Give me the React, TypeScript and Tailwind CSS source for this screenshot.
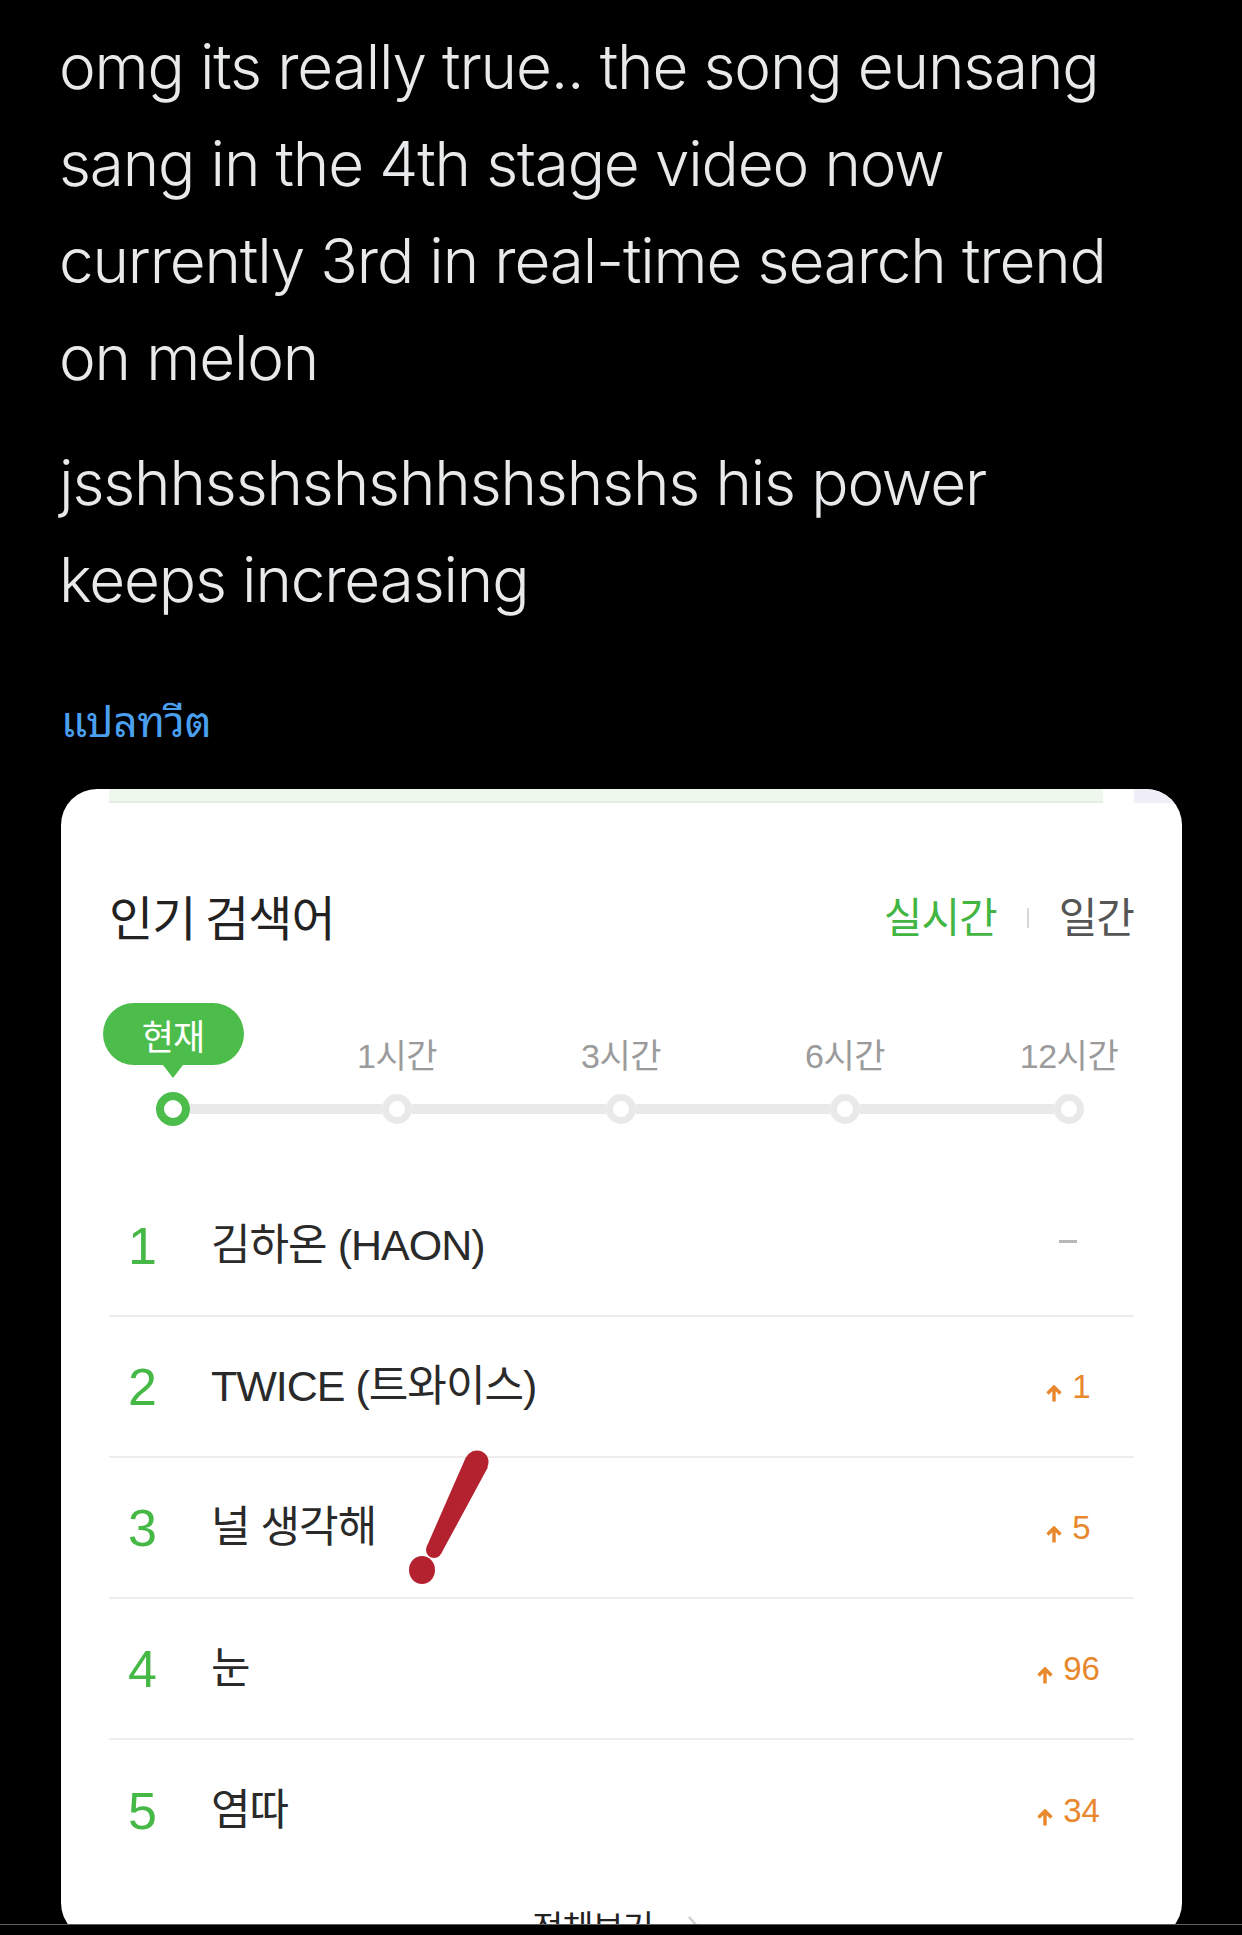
import React from "react";

const GREEN = "#4cbd4a";
const ORANGE = "#e8872c";
const RED = "#b3222e";

function UpArrow() {
  return (
    <svg width="18" height="17" viewBox="0 0 18 17" className="mr-[9px] mb-[1px]">
      <path d="M9 2.5 L9 16.5 M2.5 8.5 L9 2 L15.5 8.5" stroke={ORANGE} strokeWidth="3.4" fill="none" strokeLinejoin="miter" />
    </svg>
  );
}

const rows: { n: string; name: string; change: string | null }[] = [
  { n: "1", name: "김하온 (HAON)", change: null },
  { n: "2", name: "TWICE (트와이스)", change: "1" },
  { n: "3", name: "널 생각해", change: "5" },
  { n: "4", name: "눈", change: "96" },
  { n: "5", name: "염따", change: "34" },
];

const times = ["현재", "1시간", "3시간", "6시간", "12시간"];

const KR = "'Noto Sans CJK KR', sans-serif";

export default function App() {
  return (
    <div className="relative w-[1242px] h-[1935px] overflow-hidden bg-black">
      {/* Tweet text */}
      <div
        className="pl-[59px] pr-[20px] pt-[18px] text-[62px] leading-[97px] font-light text-[#e7e9ea] tracking-[-1.15px] whitespace-nowrap"
        style={{ fontFamily: "Inter, 'Noto Sans', sans-serif" }}
      >
        <p>
          omg its really true.. the song eunsang
          <br />
          sang in the 4th stage video now
          <br />
          currently 3rd in real-time search trend
          <br />
          on melon
        </p>
        <p className="mt-[28px]">
          jsshhsshshshhshshshs his power
          <br />
          keeps increasing
        </p>
      </div>

      <div
        className="pl-[61px] mt-[60px] h-[60px] text-[42px] leading-[60px] text-[#4a9fee]"
        style={{ fontFamily: "'Noto Sans Thai Looped', 'Loma', 'Garuda', 'Noto Sans Thai', 'Noto Sans', sans-serif" }}
      >
        แปลทวีต
      </div>

      {/* Card */}
      <div
        className="relative ml-[61px] mt-[41px] w-[1121px] h-[1150px] rounded-[36px] bg-white overflow-hidden"
        style={{ fontFamily: "'Liberation Sans', 'Noto Sans CJK KR', sans-serif" }}
      >
        {/* top strip */}
        <div className="flex h-[14px]">
          <div className="ml-[48px] w-[994px] h-[14px] bg-[#eef8ec] border-b-2 border-[#e3efe1]" />
          <div className="ml-[31px] flex-1 h-[14px] bg-[#efeef9]" />
        </div>

        {/* title row */}
        <div className="mt-[80px] h-[64px] px-[48px] flex items-center justify-between">
          <div className="text-[48px] leading-none text-[#222] tracking-[-1px]" style={{ fontFamily: KR }}>
            인기 검색어
          </div>
          <div className="flex items-center text-[42px] leading-none tracking-[-1px]" style={{ fontFamily: KR }}>
            <span style={{ color: "#43b543" }}>실시간</span>
            <span className="ml-[30px] mr-[30px] w-[2px] h-[20px] bg-[#d8d8d8] mt-[6px]" />
            <span className="text-[#555]">일간</span>
          </div>
        </div>

        {/* timeline */}
        <div className="mt-[56px] flex">
          {times.map((t, i) => (
            <div key={t} className="w-[224px] flex flex-col">
              <div className="h-[89px] flex flex-col items-center">
                {i === 0 ? (
                  <>
                    <div
                      className="w-[141px] h-[62px] rounded-full flex items-center justify-center text-white text-[35px] leading-none tracking-[-1px]"
                      style={{ backgroundColor: GREEN, fontFamily: KR }}
                    >
                      현재
                    </div>
                    <div className="w-0 h-0 border-l-[10px] border-r-[10px] border-t-[13px] border-l-transparent border-r-transparent" style={{ borderTopColor: GREEN }} />
                  </>
                ) : (
                  <div className="pt-[36px] text-[34px] leading-none text-[#9b9b9b] tracking-[-0.5px]">{t}</div>
                )}
              </div>
              <div className="h-[34px] flex items-center">
                <div className={`flex-1 h-[10px] ${i === 0 ? "bg-transparent" : "bg-[#e9e9e9]"}`} />
                {i === 0 ? (
                  <div className="w-[34px] h-[34px] rounded-full bg-white border-[8px]" style={{ borderColor: GREEN }} />
                ) : (
                  <div className="w-[30px] h-[30px] rounded-full bg-white border-[7px] border-[#e9e9e9]" />
                )}
                <div className={`flex-1 h-[10px] ${i === 4 ? "bg-transparent" : "bg-[#e9e9e9]"}`} />
              </div>
            </div>
          ))}
        </div>

        {/* list */}
        <div className="mt-[50px] mx-[48px]">
          {rows.map((r, i) => (
            <div
              key={r.n}
              className={`h-[141px] flex items-center ${i < 4 ? "border-b-2 border-[#ededed]" : ""}`}
            >
              <div className="w-[102px] pl-[19px] text-[52px] leading-none" style={{ color: "#46b846" }}>
                {r.n}
              </div>
              <div className="flex-1 text-[43px] leading-none text-[#2a2a2a] tracking-[-1px]">{r.name}</div>
              <div className="w-[100px] mr-[16px] flex items-end justify-center">
                {r.change === null ? (
                  <div className="w-[18px] h-[3px] bg-[#b8b8b8] mb-[8px]" />
                ) : (
                  <div className="flex items-end">
                    <UpArrow />
                    <span className="text-[33px] leading-none" style={{ color: ORANGE }}>
                      {r.change}
                    </span>
                  </div>
                )}
              </div>
            </div>
          ))}
        </div>

        {/* 전체보기 */}
        <div className="mt-[28px] pr-[12px] flex items-center justify-center gap-[34px]">
          <span className="text-[34px] leading-none text-[#222] tracking-[-1px]" style={{ fontFamily: KR }}>
            전체보기
          </span>
          <svg width="12" height="22" viewBox="0 0 12 22">
            <path d="M2 2 L10 11 L2 20" stroke="#d0d0d0" strokeWidth="2.5" fill="none" />
          </svg>
        </div>

        {/* red annotation */}
        <svg className="absolute left-[340px] top-[650px]" width="100" height="150" viewBox="0 0 100 150">
          <polygon points="86.9,28.3 40.2,114.6 25.8,107.4 65.1,17.7" fill={RED} />
          <circle cx="76" cy="23" r="11.5" fill={RED} />
          <circle cx="33" cy="111" r="8" fill={RED} />
          <ellipse cx="21" cy="131" rx="13" ry="14" fill={RED} />
        </svg>
      </div>

      {/* bottom bar overlay */}
      <div className="absolute left-0 right-0 bottom-0 h-[11px] bg-black border-t border-[#5c5c5c]" />
    </div>
  );
}
